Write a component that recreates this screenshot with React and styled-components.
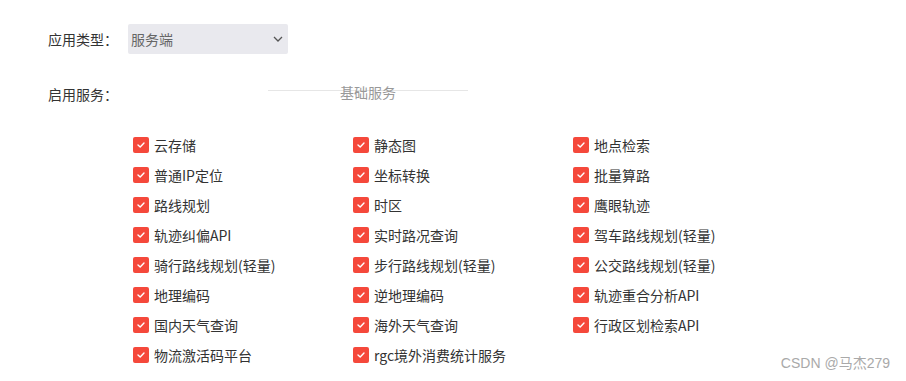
import React from "react";
import styled, { createGlobalStyle } from "styled-components";

const Global = createGlobalStyle`
  html, body { margin: 0; padding: 0; background: #fff; }
  body { font-family: "Noto Sans CJK SC", "Noto Sans", sans-serif; color: #333; }
`;

const Page = styled.div`
  position: relative;
  width: 906px;
  height: 381px;
  box-sizing: border-box;
  padding: 24px 0 0 48px;
  overflow: hidden;
`;

const FormRow = styled.div`
  display: flex;
  align-items: ${(p) => p.$align || "center"};
  margin-top: ${(p) => p.$mt || 0}px;
`;

const Label = styled.div`
  width: 80px;
  font-size: 14px;
  line-height: 20px;
  color: #333;
  flex: none;
`;

const Select = styled.div`
  width: 160px;
  height: 30px;
  box-sizing: border-box;
  background: #e9e9ee;
  border-radius: 2px;
  display: flex;
  align-items: center;
  justify-content: space-between;
  padding: 0 5px 0 3px;
  font-size: 14px;
  color: #666;
`;

const Divider = styled.div`
  position: relative;
  width: 200px;
  height: 20px;
  margin-left: 140px;
  margin-top: -2px;
  display: flex;
  justify-content: center;
  font-size: 14px;
  line-height: 20px;
  color: #999;
  &::before {
    content: "";
    position: absolute;
    left: 0;
    right: 0;
    top: 8px;
    border-top: 1px solid #e6e6e6;
  }
`;

const DividerText = styled.span`
  position: relative;
`;

const Grid = styled.div`
  display: grid;
  grid-template-columns: repeat(3, 220px);
  grid-auto-rows: 30px;
  margin: 26px 0 0 85px;
`;

const Item = styled.label`
  display: flex;
  align-items: center;
  gap: 5px;
  font-size: 14px;
  color: #333;
`;

const Box = styled.span`
  width: 16px;
  height: 16px;
  border-radius: 2px;
  background: #f5483b;
  display: flex;
  align-items: center;
  justify-content: center;
  flex: none;
`;

const Watermark = styled.div`
  position: absolute;
  right: 16px;
  bottom: 9px;
  font-family: "Liberation Sans", "Noto Sans CJK SC", sans-serif;
  font-size: 14px;
  color: #a9a9a9;
`;

const items = [
  "云存储", "静态图", "地点检索",
  "普通IP定位", "坐标转换", "批量算路",
  "路线规划", "时区", "鹰眼轨迹",
  "轨迹纠偏API", "实时路况查询", "驾车路线规划(轻量)",
  "骑行路线规划(轻量)", "步行路线规划(轻量)", "公交路线规划(轻量)",
  "地理编码", "逆地理编码", "轨迹重合分析API",
  "国内天气查询", "海外天气查询", "行政区划检索API",
  "物流激活码平台", "rgc境外消费统计服务",
];

function Check() {
  return (
    <Box>
      <svg width="10" height="10" viewBox="0 0 10 10">
        <polyline points="2,5 4.2,7 8,3" fill="none" stroke="#fff" strokeWidth="1.4" strokeLinecap="round" strokeLinejoin="round" />
      </svg>
    </Box>
  );
}

export default function App() {
  return (
    <>
      <Global />
      <Page>
        <FormRow>
          <Label>应用类型：</Label>
          <Select>
            <span>服务端</span>
            <svg width="10" height="6" viewBox="0 0 10 6">
              <polyline points="1,1 5,5 9,1" fill="none" stroke="#555" strokeWidth="1.3" />
            </svg>
          </Select>
        </FormRow>
        <FormRow $align="flex-start" $mt={30}>
          <Label>启用服务：</Label>
          <Divider>
            <DividerText>基础服务</DividerText>
          </Divider>
        </FormRow>
        <Grid>
          {items.map((t) => (
            <Item key={t}>
              <Check />
              <span>{t}</span>
            </Item>
          ))}
        </Grid>
        <Watermark>CSDN @马杰279</Watermark>
      </Page>
    </>
  );
}
